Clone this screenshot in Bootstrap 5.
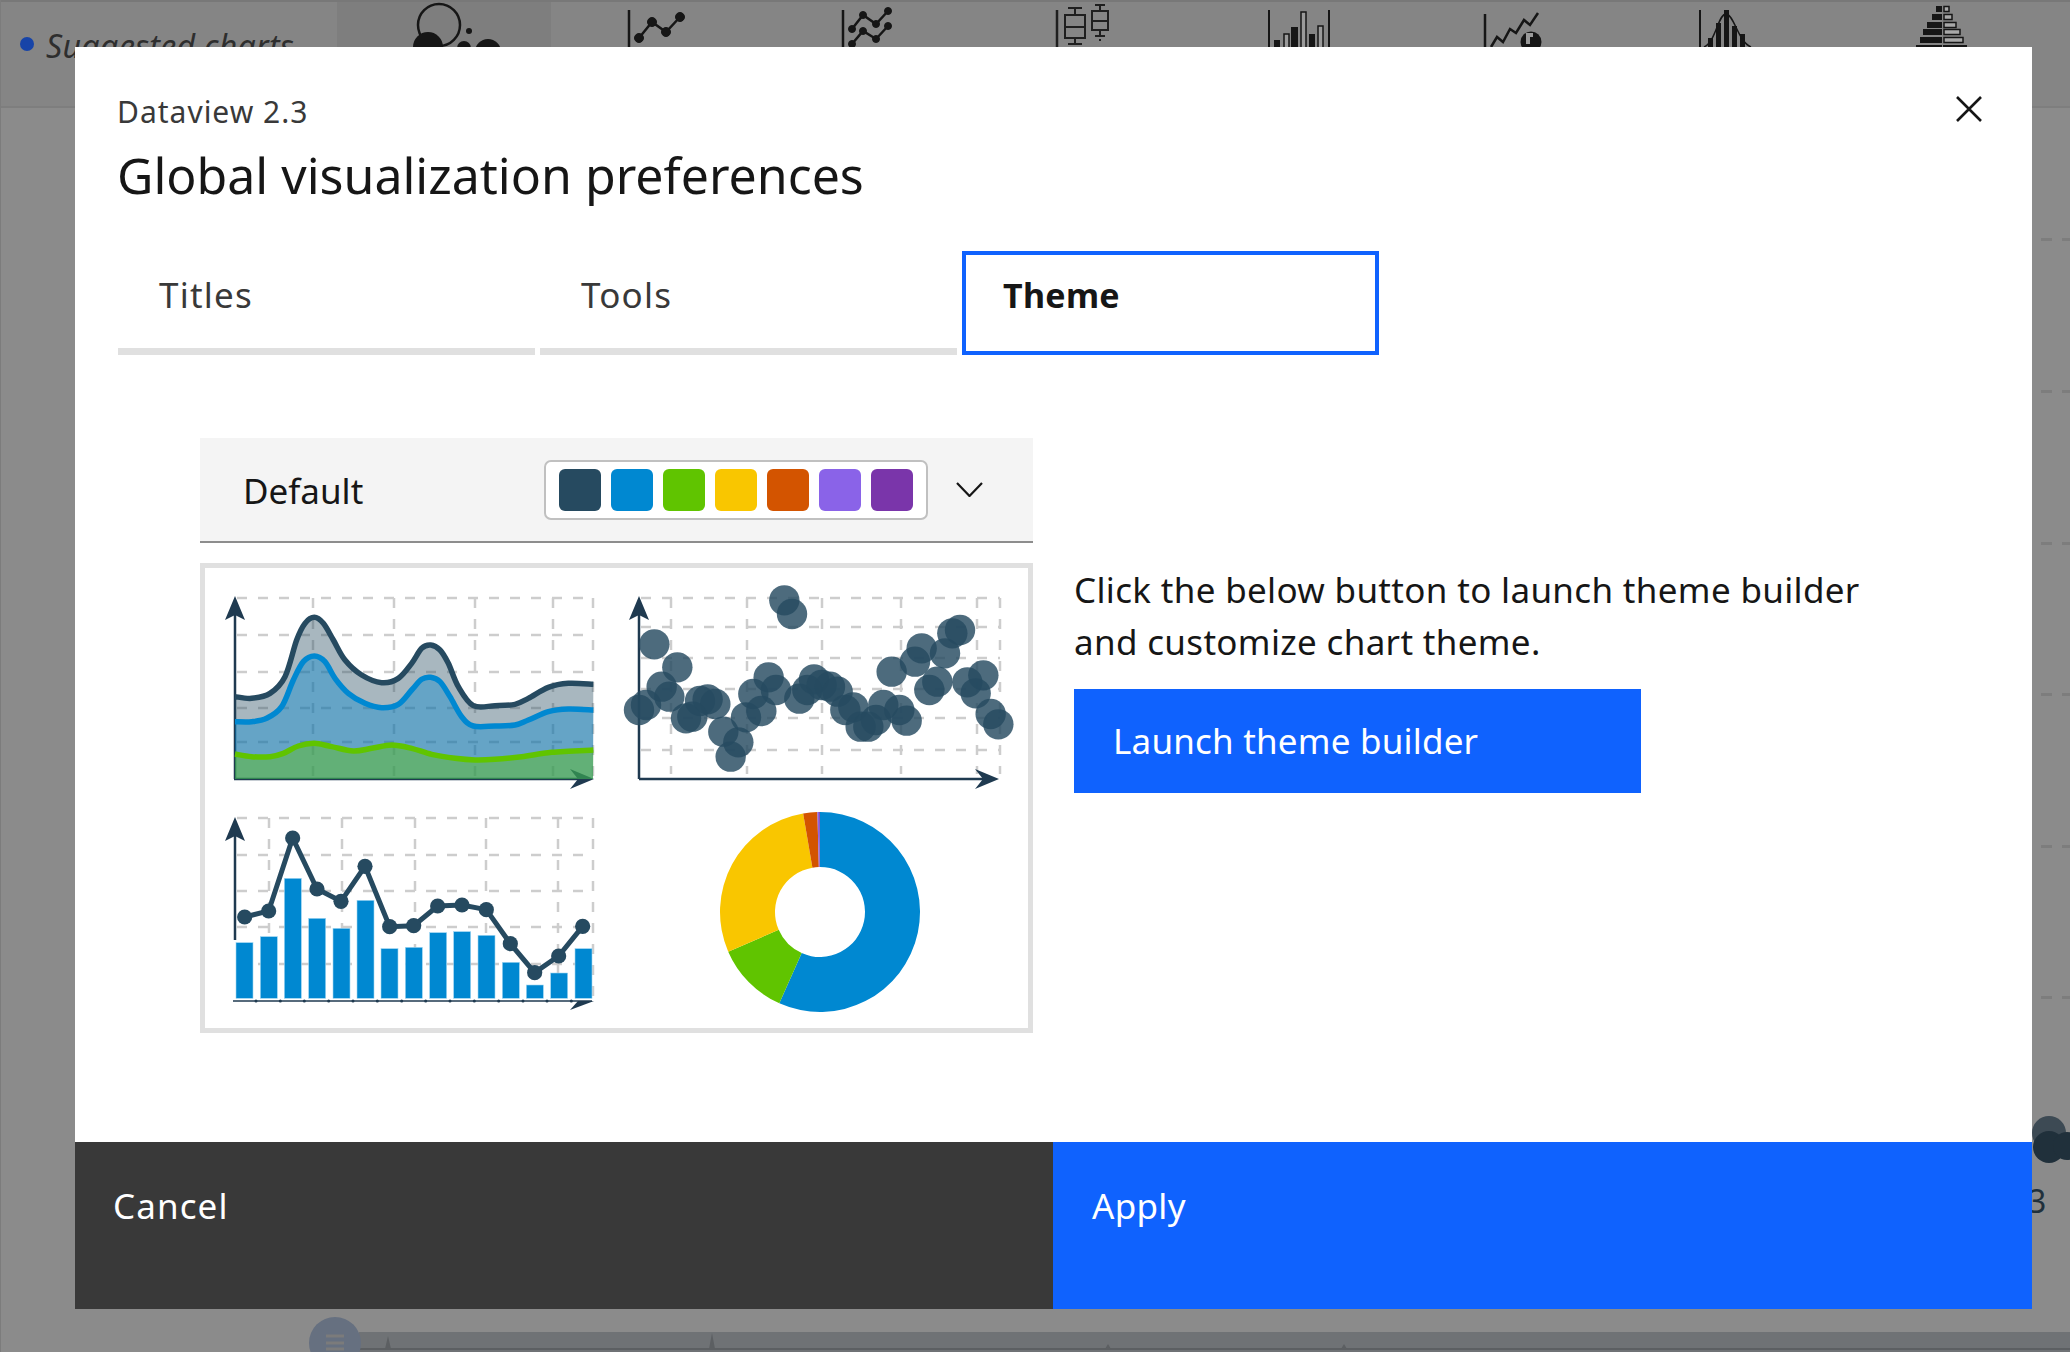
<!DOCTYPE html>
<html lang="en">
<head>
    <meta charset="UTF-8">
    <meta name="viewport" content="width=device-width, initial-scale=1.0">
    <title>Global visualization preferences</title>
    <link href="https://cdn.jsdelivr.net/npm/bootstrap@5.3.0/dist/css/bootstrap.min.css" rel="stylesheet">
    <style>
        body { background: #8b8b8b; font-family: "Noto Sans", sans-serif; width: 2070px; height: 1352px; overflow: hidden; color: #161616; }
        .stage { width: 2070px; height: 1352px; border-left: 1px solid #7c7c7c; }
        .chart-bar { height: 108px; background: #858585; border-top: 2px solid #787878; border-bottom: 2px solid #7e7e7e; }
        .chart-label { width: 336px; padding: 24px 0 0 19px; color: #2e2e2e; font-size: 32px; font-style: italic; letter-spacing: .3px; line-height: 40px; white-space: nowrap; overflow: hidden; }
        .label-dot { width: 14px; height: 14px; margin-top: 11px; background: #1744a8; }
        .chart-cell { width: 214px; }
        .chart-cell svg { display: block; }
        .cell-on { background: #7e7e7e; }
        .backdrop svg { display: block; }
        .prefs { position: absolute; left: 74px; top: 47px; width: 1957px; height: 1262px; background: #fff; }
        .prefs-head { padding: 45px 42px 0; }
        .prefs-kicker { font-size: 30px; line-height: 40px; color: #393939; letter-spacing: 1px; }
        .prefs-title { font-size: 50px; line-height: 64px; font-weight: 400; margin: 11px 0 0; }
        .prefs-close { top: 49px; right: 50px; width: 26px; height: 26px; background: none; border: 0; padding: 0; }
        .prefs-close svg { display: block; }
        .tab-row { margin: 44px 0 0 43px; gap: 5px; }
        .tab-item { display: block; width: 417px; height: 104px; padding: 20px 0 0 41px; font-size: 35px; line-height: 48px; letter-spacing: 1.2px; color: #393939; border: 0; border-bottom: 7px solid #e0e0e0; border-radius: 0; text-decoration: none; }
        .tab-item:hover { color: #393939; }
        .tab-item.active { color: #161616; font-size: 34px; font-weight: 700; letter-spacing: .3px; border: 4px solid #0f62fe; padding: 16px 0 0 37px; }
        .prefs-body { margin: 83px 0 0 125px; gap: 41px; }
        .picker-col { width: 833px; }
        .theme-picker { height: 105px; background: #f4f4f4; border-bottom: 2px solid #8d8d8d; padding-left: 43px; font-size: 35px; }
        .swatch-box { gap: 10px; padding: 0 13px; height: 60px; width: 384px; background: #fff; border: 2px solid #c0c0c0; border-radius: 7px; }
        .swatch { width: 42px; height: 42px; border-radius: 6px; }
        .picker-arrow { margin: 0 50px 0 28px; }
        .preview { margin-top: 20px; height: 470px; }
        .preview svg { display: block; }
        .info-col { width: 800px; padding-top: 126px; }
        .info-text { font-size: 35px; line-height: 52px; margin: 0 0 21px; letter-spacing: .33px; }
        .builder-btn { width: 567px; height: 104px; padding: 0 0 0 39px; font-size: 35px; line-height: 48px; letter-spacing: .2px; text-align: left; background: #0f62fe; border: 0; border-radius: 0; color: #fff; }
        .prefs-foot { height: 167px; }
        .foot-btn { height: 167px; padding: 38px 0 0 39px; font-size: 35px; line-height: 52px; text-align: left; border: 0; border-radius: 0; color: #fff; }
        .foot-cancel { width: 978px; background: #393939; padding-left: 38px; letter-spacing: 1.1px; }
        .foot-apply { background: #0f62fe; letter-spacing: .3px; }
    </style>
</head>
<body>
<div class="stage position-relative">
    <div class="chart-bar d-flex">
        <div class="chart-label d-flex"><span class="label-dot rounded-circle d-inline-block flex-shrink-0 me-2"></span><span class="ms-1">Suggested charts</span></div>
        <div class="chart-cell cell-on"><svg width="214" height="60" viewBox="337 2 214 60" fill="#161616"><circle cx="439" cy="25" r="21" fill="none" stroke="#161616" stroke-width="2.5"/><circle cx="428" cy="47" r="15"/><circle cx="469" cy="31" r="3"/><circle cx="464" cy="48" r="7"/><circle cx="488" cy="52" r="13"/></svg></div>
        <div class="chart-cell"><svg width="214" height="60" viewBox="551 2 214 60" fill="#161616" stroke="#161616"><path d="M629 10V60" stroke-width="2.5"/><path d="M639 38 652 22 666 32 680 17" fill="none" stroke-width="2.5"/><circle cx="639" cy="38" r="4.5"/><circle cx="652" cy="22" r="4.5"/><circle cx="666" cy="32" r="4.5"/><circle cx="680" cy="17" r="4.5"/></svg></div>
        <div class="chart-cell"><svg width="214" height="60" viewBox="765 2 214 60" fill="#161616" stroke="#161616"><path d="M843 10V60" stroke-width="2.5"/><path d="M852 29 863 15 876 24 888 11M852 44 863 31 876 39 888 26" fill="none" stroke-width="2.5"/><circle cx="852" cy="29" r="3.5"/><circle cx="863" cy="15" r="3.5"/><circle cx="876" cy="24" r="3.5"/><circle cx="888" cy="11" r="3.5"/><circle cx="852" cy="44" r="3.5"/><circle cx="863" cy="31" r="3.5"/><circle cx="876" cy="39" r="3.5"/><circle cx="888" cy="26" r="3.5"/></svg></div>
        <div class="chart-cell"><svg width="214" height="60" viewBox="979 2 214 60" fill="none" stroke="#1f1f1f" stroke-width="2"><path d="M1057 10V60" stroke-width="2.5"/><path d="M1065 15H1085V38H1065ZM1065 27H1085M1075 8V15M1068 8H1082M1075 38V44M1068 44H1082"/><path d="M1092 11H1108V30H1092ZM1092 21H1108M1100 5V11M1095 5H1105M1100 30V36M1095 36H1105M1100 39V41"/></svg></div>
        <div class="chart-cell"><svg width="214" height="60" viewBox="1193 2 214 60" fill="#161616"><path d="M1269 10V60M1329 10V60" stroke="#161616" stroke-width="2"/><rect x="1274" y="40" width="6" height="20"/><rect x="1291" y="27" width="7" height="33"/><rect x="1309" y="34" width="6" height="26"/><g fill="#9a9a9a" stroke="#161616" stroke-width="1.5"><rect x="1284" y="34" width="5" height="26"/><rect x="1301" y="12" width="5" height="48"/><rect x="1318" y="26" width="5" height="34"/></g></svg></div>
        <div class="chart-cell"><svg width="214" height="60" viewBox="1407 2 214 60" fill="#161616"><path d="M1485 14V60" stroke="#161616" stroke-width="2.5"/><path d="M1491 47 1497 37 1503 42 1510 29 1516 33 1524 20 1530 25 1538 13" fill="none" stroke="#161616" stroke-width="2.5"/><circle cx="1531" cy="42" r="10.5"/><path d="M1526 44V33H1533V37H1530V44Z" fill="#9a9a9a"/></svg></div>
        <div class="chart-cell"><svg width="214" height="60" viewBox="1621 2 214 60" fill="#161616"><path d="M1700 10V60" stroke="#161616" stroke-width="2"/><rect x="1708" y="38" width="5" height="22"/><rect x="1716" y="23" width="5" height="37"/><rect x="1724" y="10" width="5" height="50"/><rect x="1732" y="26" width="5" height="34"/><rect x="1740" y="34" width="5" height="26"/><path d="M1704 47C1716 42 1718 14 1726 14S1738 42 1751 47" fill="none" stroke="#161616" stroke-width="1.5"/></svg></div>
        <div class="chart-cell"><svg width="214" height="60" viewBox="1835 2 214 60" fill="#161616"><rect x="1936" y="6" width="6" height="6"/><rect x="1932" y="14" width="10" height="6"/><rect x="1927" y="22" width="15" height="6"/><rect x="1923" y="29" width="19" height="6"/><rect x="1920" y="37" width="22" height="6"/><rect x="1916" y="45" width="26" height="6"/><g fill="#a8a8a8" stroke="#161616" stroke-width="1.5"><rect x="1944" y="6.5" width="5" height="5"/><rect x="1944" y="14.5" width="8" height="5"/><rect x="1944" y="22.5" width="12" height="5"/><rect x="1944" y="29.5" width="16" height="5"/><rect x="1944" y="37.5" width="19" height="5"/></g><rect x="1943" y="45" width="24" height="6"/></svg></div>
    </div>
    <div class="backdrop">
        <svg width="2070" height="1244" viewBox="0 108 2070 1244">
            <g fill="#7d7d7d"><rect x="2040" y="238" width="11" height="3"/><rect x="2061" y="238" width="9" height="3"/><rect x="2040" y="390" width="11" height="3"/><rect x="2061" y="390" width="9" height="3"/><rect x="2040" y="542" width="11" height="3"/><rect x="2061" y="542" width="9" height="3"/><rect x="2040" y="693" width="11" height="3"/><rect x="2061" y="693" width="9" height="3"/><rect x="2040" y="845" width="11" height="3"/><rect x="2061" y="845" width="9" height="3"/><rect x="2040" y="996" width="11" height="3"/><rect x="2061" y="996" width="9" height="3"/></g>
            <circle cx="2048" cy="1133" r="17" fill="#3d4a54"/><circle cx="2048" cy="1147" r="16" fill="#20303b"/><circle cx="2066" cy="1146" r="14" fill="#20303b"/>
            <text x="2027" y="1213" font-size="32" fill="#20303b">3</text>
            <rect x="358" y="1332" width="1712" height="20" fill="#6f7275"/>
            <path d="M358 1349H2070" stroke="#5c5f62" stroke-width="2"/>
            <path d="M384 1349 387 1336 390 1349ZM708 1349 711 1333 714 1349ZM1104 1349 1107 1344 1110 1349ZM1340 1349 1343 1344 1346 1349Z" fill="#5c5f62"/>
            <circle cx="334" cy="1343" r="26" fill="#667080"/>
            <path d="M325 1336H343M325 1343H343M325 1349H343" stroke="#7b7b7b" stroke-width="3"/>
        </svg>
    </div>

    <div class="prefs d-flex flex-column">
        <div class="prefs-head">
            <div class="prefs-kicker">Dataview 2.3</div>
            <h1 class="prefs-title">Global visualization preferences</h1>
        </div>
        <button class="prefs-close position-absolute" type="button" aria-label="Close"><svg width="26" height="26" viewBox="0 0 26 26"><path d="M1 1 25 25M25 1 1 25" stroke="#161616" stroke-width="2.6"/></svg></button>
        <div class="tab-row d-flex">
            <a class="tab-item" href="#">Titles</a>
            <a class="tab-item" href="#">Tools</a>
            <a class="tab-item active" href="#">Theme</a>
        </div>
        <div class="prefs-body d-flex flex-grow-1">
            <div class="picker-col">
                <div class="theme-picker d-flex align-items-center">
                    <span class="mt-1">Default</span>
                    <span class="swatch-box d-flex align-items-center ms-auto" id="swatches"></span>
                    <svg class="picker-arrow" width="27" height="15" viewBox="0 0 27 15"><path d="M1 1 13.500 14 26 1" fill="none" stroke="#161616" stroke-width="2.2"/></svg>
                </div>
                <div class="preview"><svg id="preview" width="833" height="470" viewBox="200 563 833 470"></svg></div>
            </div>
            <div class="info-col">
                <p class="info-text">Click the below button to launch theme builder<br>and customize chart theme.</p>
                <button class="builder-btn btn" type="button">Launch theme builder</button>
            </div>
        </div>
        <div class="prefs-foot d-flex">
            <button class="foot-btn foot-cancel btn flex-shrink-0 d-flex align-items-start" type="button">Cancel</button>
            <button class="foot-btn foot-apply btn flex-fill d-flex align-items-start" type="button">Apply</button>
        </div>
    </div>
</div>
<script src="https://cdn.jsdelivr.net/npm/bootstrap@5.3.0/dist/js/bootstrap.bundle.min.js"></script>
<script>
    const dark = '#264a60', blue = '#0088d1', green = '#60c400', yellow = '#f9c600', orange = '#d35400', violet = '#8a63e8', purple = '#7a35aa';

    document.getElementById('swatches').innerHTML = [dark, blue, green, yellow, orange, violet, purple]
        .map(c => `<span class="swatch d-block flex-shrink-0" style="background:${c}"></span>`).join('');

    // smooth line through the points (catmull-rom to bezier)
    function smooth(p) {
        let d = `M${p[0][0]} ${p[0][1]}`;
        for (let i = 0; i < p.length - 1; i++) {
            const a = p[i - 1] || p[i], b = p[i], c = p[i + 1], e = p[i + 2] || c;
            d += `C${b[0] + (c[0] - a[0]) / 6} ${b[1] + (c[1] - a[1]) / 6} ${c[0] - (e[0] - b[0]) / 6} ${c[1] - (e[1] - b[1]) / 6} ${c[0]} ${c[1]}`;
        }
        return d;
    }
    // the coordinates below were read off 3x crops, so map them back
    const at = (ox, oy) => ([x, y]) => [x / 3 + ox, y / 3 + oy];

    function grid(ys, xs, x0, x1, y0, y1) {
        const lines = ys.map(y => `M${x0} ${y}H${x1}`).concat(xs.map(x => `M${x} ${y0}V${y1}`)).join('');
        return `<path d="${lines}" fill="none" stroke="#cdcdcd" stroke-width="2.500" stroke-dasharray="10 11"/>`;
    }
    function upArrow(x, top) {
        return `<path d="M${x} ${top}L${x + 10} ${top + 24}L${x} ${top + 19}L${x - 10} ${top + 24}Z" fill="#1f3a50"/>`;
    }
    function axes(x, top, base, right, left) {
        return `<path d="M${x} ${top + 10}V${base}M${left} ${base}H${right - 8}" fill="none" stroke="#1f3a50" stroke-width="2.500"/>` + upArrow(x, top) +
            `<path d="M${right} ${base}L${right - 24} ${base + 10}L${right - 16} ${base}L${right - 24} ${base - 10}Z" fill="#1f3a50"/>`;
    }

    let svg = '';
    // frame
    svg += '<rect x="202.500" y="565.500" width="828" height="465" fill="#fff" stroke="#e0e0e0" stroke-width="5"/>';

    // stacked area chart
    const a1 = at(195, 560);
    const top1 = [[120,410],[170,415],[225,400],[270,350],[305,240],[330,190],[358,172],[385,190],[415,240],[450,300],[500,345],[560,368],[610,355],[650,310],[680,265],[707,255],[735,270],[760,310],[790,380],[835,437],[900,437],[960,433],[1000,415],[1060,382],[1120,370],[1195,373]].map(a1);
    const mid1 = [[120,485],[170,485],[215,475],[260,440],[295,360],[325,305],[358,288],[390,305],[420,355],[460,400],[510,430],[560,443],[610,433],[650,390],[680,358],[707,352],[735,365],[765,410],[800,470],[835,498],[900,498],[960,495],[1000,480],[1060,455],[1120,447],[1195,450]].map(a1);
    const low1 = [[120,582],[170,590],[225,590],[265,580],[310,558],[358,550],[410,560],[475,573],[530,565],[590,555],[650,565],[710,583],[780,595],[840,600],[900,598],[980,590],[1070,577],[1195,570]].map(a1);
    svg += grid([598, 635, 672, 708, 742], [313, 394, 475, 553, 593], 237, 593, 598, 779);
    svg += axes(235, 596, 779, 594, 234);
    [[top1, dark], [mid1, blue], [low1, green]].forEach(([p, c]) => {
        svg += `<path d="${smooth(p)}L593 779L235 779Z" fill="${c}" fill-opacity=".4"/>`;
    });
    [[top1, dark], [mid1, blue], [low1, green]].forEach(([p, c]) => {
        svg += `<path d="${smooth(p)}" fill="none" stroke="${c}" stroke-width="5.500"/>`;
    });

    // scatter chart
    const a2 = at(610, 570);
    svg += grid([598, 627, 658, 689, 718, 750], [671, 747, 822, 901, 977, 1000], 641, 1000, 598, 774);
    svg += axes(639, 596, 779, 999, 639);
    [[523,91],[546,132],[133,223],[202,292],[155,350],[178,380],[87,420],[108,405],[270,393],[293,388],[316,402],[228,445],[247,440],[340,485],[385,517],[362,560],[408,442],[430,372],[454,423],[476,322],[498,360],[568,386],[592,360],[612,328],[635,345],[660,350],[683,365],[706,420],[730,412],[752,470],[775,470],[798,450],[820,405],[868,420],[890,452],[845,305],[915,275],[935,235],[958,360],[982,335],[1005,250],[1027,190],[1050,180],[1072,337],[1097,370],[1120,316],[1142,432],[1165,463]].map(a2)
        .forEach(([x, y]) => { svg += `<circle cx="${x}" cy="${y}" r="15.200" fill="${dark}" fill-opacity=".82"/>`; });

    // bar + line chart
    const a3 = at(195, 790);
    svg += grid([818, 855, 891, 927, 964], [269, 342, 415, 486, 558, 593], 237, 593, 818, 1001);
    // y axis stops above the first bar, only the lower half of the x arrow shows
    svg += `<path d="M235 827V940" fill="none" stroke="#1f3a50" stroke-width="2.500"/>` + upArrow(235, 817);
    svg += `<path d="M233 1001H592" stroke="#1f3a50" stroke-width="1.500"/><path d="M594 1001L570 1010L578 1001Z" fill="#1f3a50"/>`;
    [183,256,328,401,474,547,620,692,765,838,911,984,1056,1129].map(x => x / 3 + 195)
        .forEach(x => { svg += `<circle cx="${x}" cy="1001" r="1.500" fill="#1f3a50"/>`; });
    [[123,458],[196,440],[268,265],[341,385],[414,415],[486,331],[558,476],[631,472],[704,428],[776,425],[849,436],[922,517],[994,585],[1067,549],[1140,476]].map(a3)
        .forEach(([x, y]) => { svg += `<rect x="${x}" y="${y}" width="17" height="${998.300 - y}" fill="${blue}" stroke="#9fd6f2" stroke-width=".6"/>`; });
    const pts3 = [[149,381],[221,363],[293,144],[366,297],[438,334],[510,229],[584,410],[656,407],[728,348],[801,345],[874,359],[946,461],[1019,548],[1091,498],[1163,409]].map(a3);
    svg += `<polyline points="${pts3.map(p => p.join(',')).join(' ')}" fill="none" stroke="${dark}" stroke-width="5"/>`;
    pts3.forEach(([x, y]) => { svg += `<circle cx="${x}" cy="${y}" r="7.600" fill="${dark}"/>`; });

    // donut chart
    function slice(from, to, c) {
        const cx = 820, cy = 912, R = 100, r = 45, big = to - from > 180 ? 1 : 0;
        const pt = (rad, deg) => [cx + rad * Math.sin(deg * Math.PI / 180), cy - rad * Math.cos(deg * Math.PI / 180)].join(' ');
        return `<path d="M${pt(R, from)}A${R} ${R} 0 ${big} 1 ${pt(R, to)}L${pt(r, to)}A${r} ${r} 0 ${big} 0 ${pt(r, from)}Z" fill="${c}"/>`;
    }
    svg += slice(0, 204, blue) + slice(204, 246.600, green) + slice(246.600, 350.300, yellow) + slice(350.300, 358.500, orange) + slice(358.500, 359.500, violet) + slice(359.500, 360, purple);

    document.getElementById('preview').innerHTML = svg;
</script>
</body>
</html>
